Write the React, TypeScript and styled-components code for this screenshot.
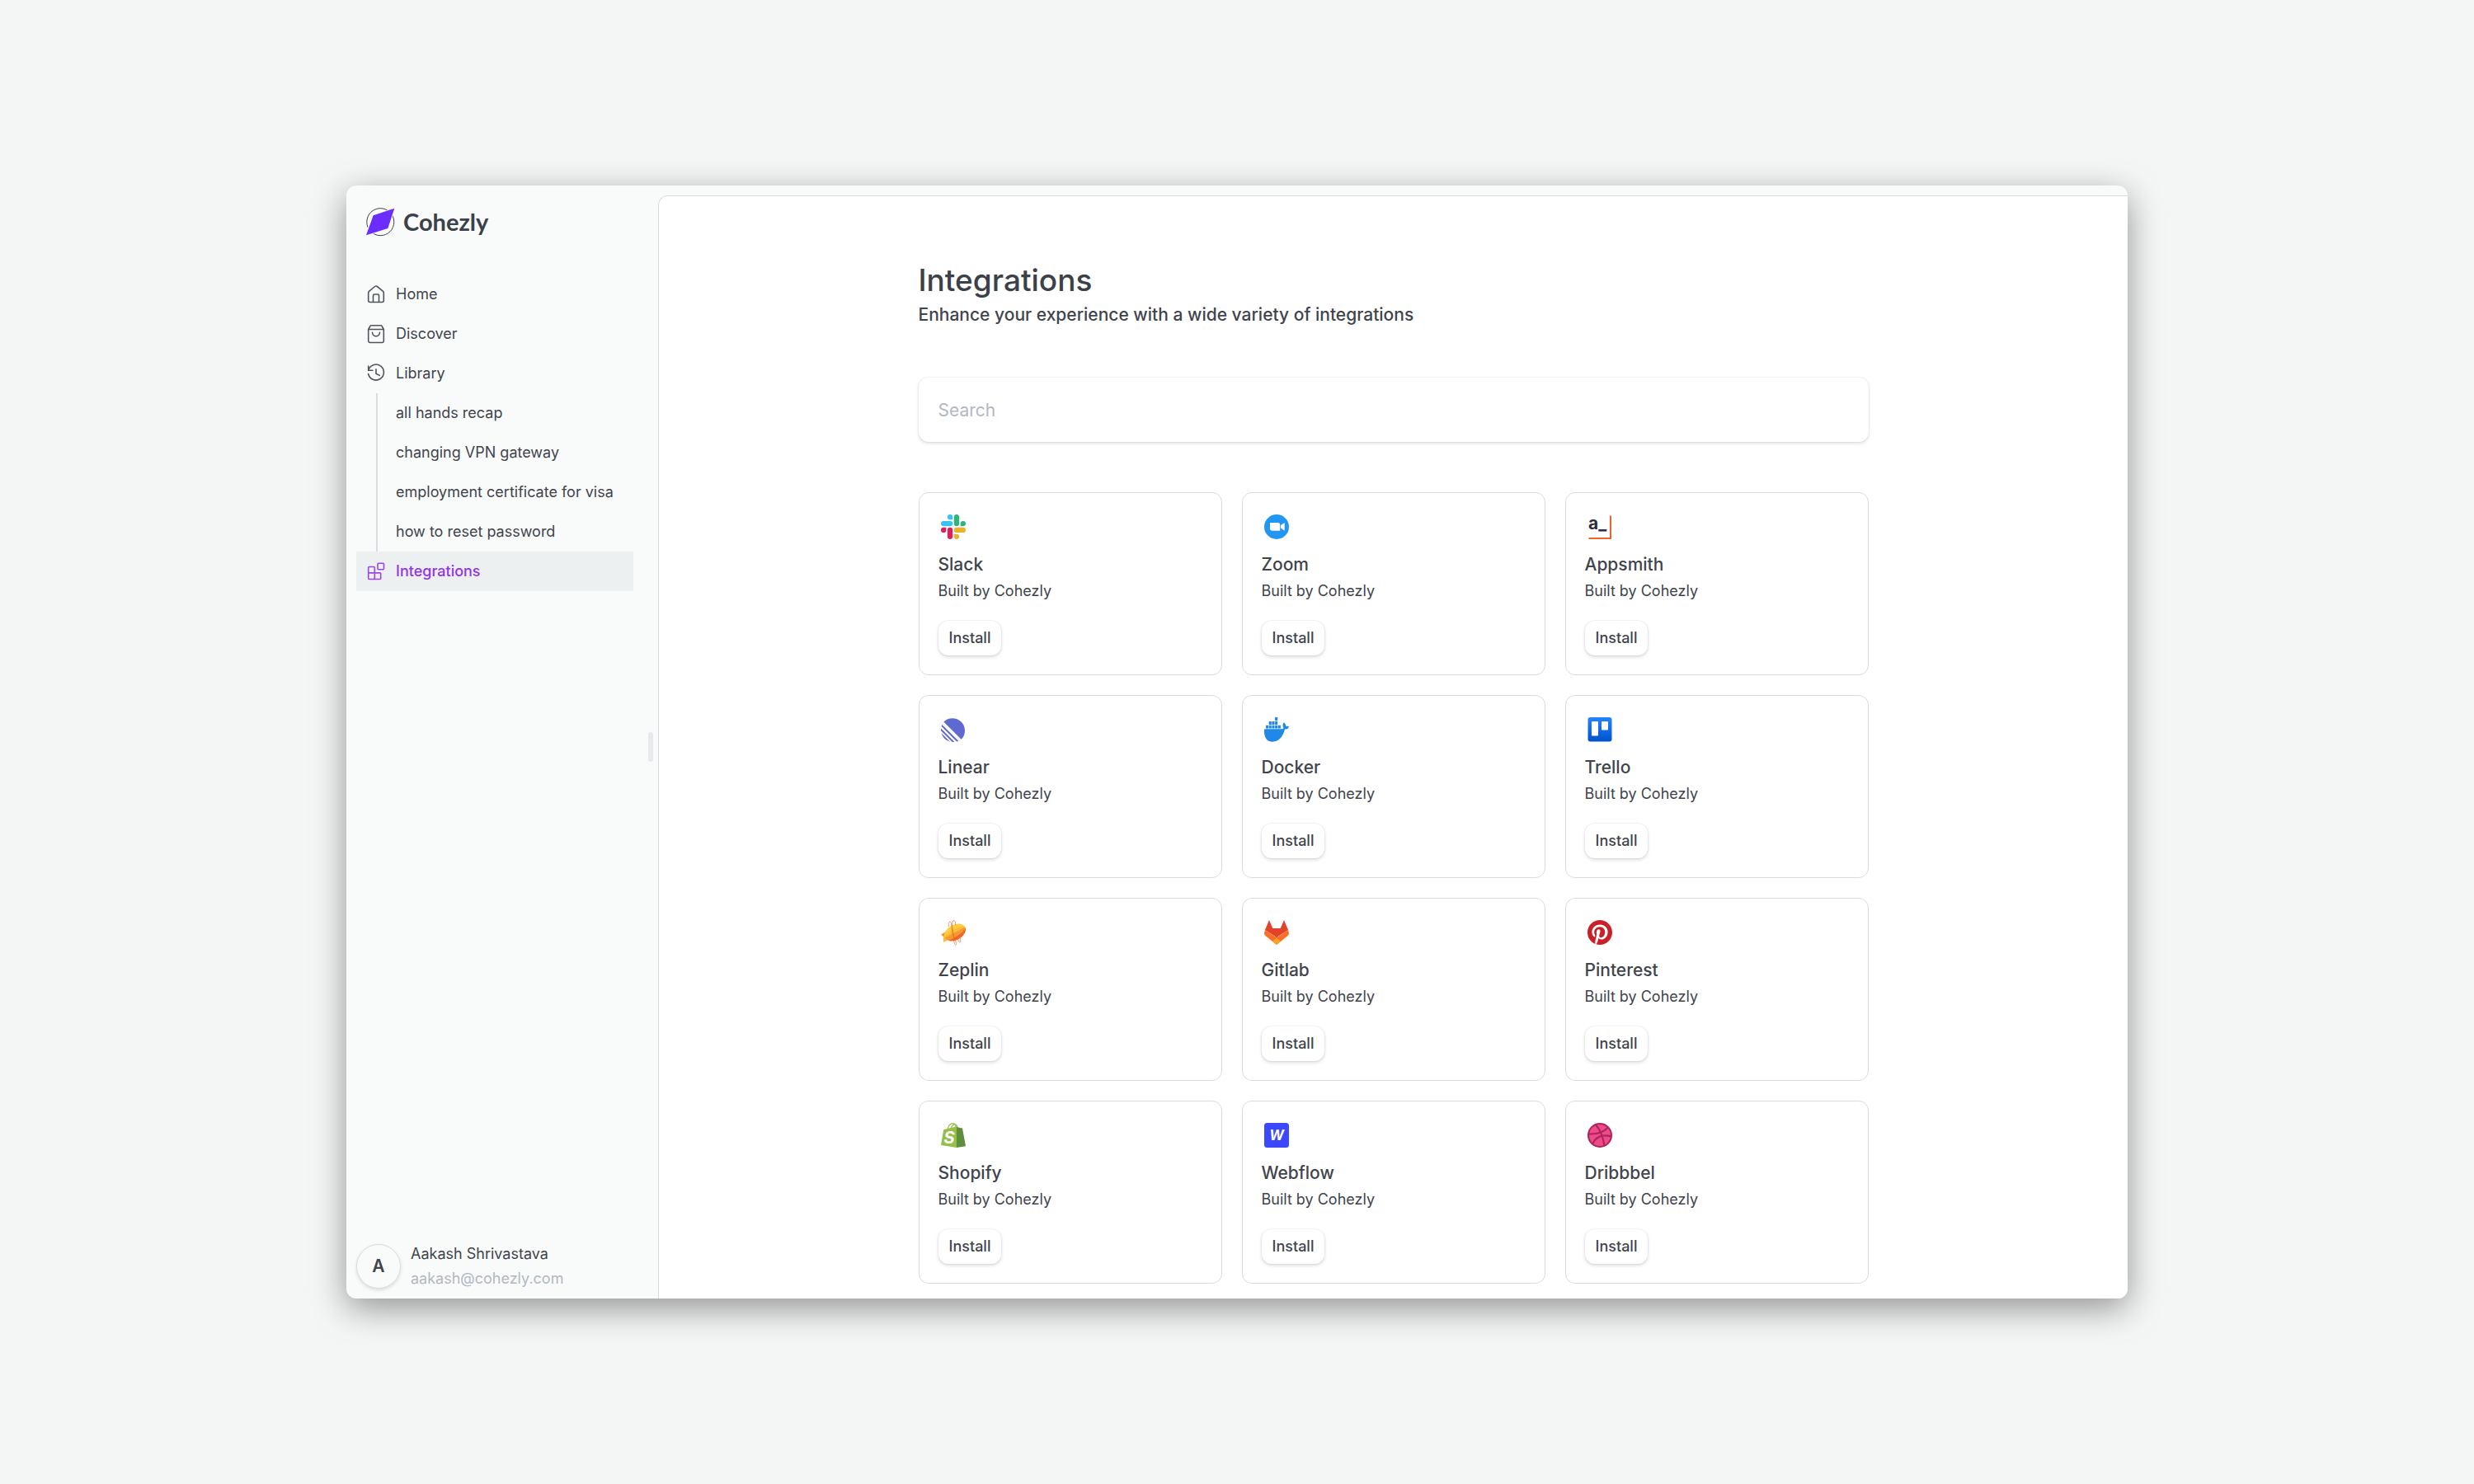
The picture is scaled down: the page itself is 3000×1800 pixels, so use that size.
import React from "react";
import styled, { createGlobalStyle, css } from "styled-components";

const color = {
  page: "#f4f6f5",
  shell: "#f9fbfa",
  surface: "#ffffff",
  active: "#edf0f1",
  line: "#d8dce1",
  handle: "#e7eaed",
  text: "#3f444d",
  heading: "#3b4149",
  muted: "#b1b8c4",
  accent: "#9333ea",
};

const GlobalStyle = createGlobalStyle`
  *, *::before, *::after { box-sizing: border-box; }
  body {
    margin: 0;
    background: ${color.page};
    color: ${color.text};
    font-family: Inter, "Liberation Sans", sans-serif;
    font-size: 18px;
    line-height: 24px;
  }
  h1, h2, p, ul { margin: 0; padding: 0; }
  ul { list-style: none; }
  button, input { font: inherit; color: inherit; }
`;

const Page = styled.div`
  min-height: 100vh;
  display: flex;
  align-items: center;
  justify-content: center;
`;

const Window = styled.div`
  display: flex;
  width: 72%;
  height: 75vh;
  padding-top: 12px;
  overflow: hidden;
  border-radius: 12px;
  background: ${color.shell};
  box-shadow: 0 12px 42px rgba(0, 0, 0, 0.4);
`;

const Sidebar = styled.aside`
  display: flex;
  flex-direction: column;
  flex: none;
  width: 360px;
  padding: 12px;
`;

const Brand = styled.a`
  display: flex;
  align-items: center;
  gap: 10px;
  height: 40px;
  margin-bottom: 44px;
  padding-left: 12px;
  color: ${color.heading};
  font: 700 29px/36px Lato, sans-serif;
  text-decoration: none;
`;

const rowStyle = css`
  display: flex;
  align-items: center;
  height: 48px;
  text-decoration: none;
  white-space: nowrap;
`;

const NavLink = styled.a<{ $active?: boolean }>`
  ${rowStyle}
  gap: 12px;
  padding: 0 12px;
  color: ${(p) => (p.$active ? color.accent : color.text)};
  background: ${(p) => (p.$active ? color.active : "transparent")};
  font-weight: ${(p) => (p.$active ? 500 : 400)};
`;

const SubList = styled.ul`
  margin-left: 24px;
  border-left: 2px solid ${color.line};
`;

const SubLink = styled.a`
  ${rowStyle}
  padding-left: 22px;
  color: ${color.text};
`;

const NavIcon = styled.svg`
  width: 24px;
  height: 24px;
  fill: none;
  stroke: currentColor;
  stroke-width: 1.6;
  stroke-linecap: round;
  stroke-linejoin: round;
  opacity: 0.9;
`;

const Account = styled.div`
  display: flex;
  align-items: center;
  gap: 12px;
  margin-top: auto;
`;

const Avatar = styled.div`
  display: grid;
  place-items: center;
  width: 54px;
  height: 54px;
  border: 1px solid ${color.line};
  border-radius: 50%;
  background: ${color.shell};
  box-shadow: 0 2px 4px rgba(0, 0, 0, 0.12);
  font-size: 21px;
  font-weight: 600;
`;

const AccountText = styled.div`
  display: flex;
  flex-direction: column;
  gap: 6px;
`;

const Email = styled.span`
  color: ${color.muted};
`;

const Resizer = styled.div`
  display: flex;
  align-items: center;
  justify-content: center;
  flex: none;
  width: 18px;
  cursor: col-resize;

  &::after {
    content: "";
    width: 6px;
    height: 36px;
    border-radius: 3px;
    background: ${color.handle};
  }
`;

const Main = styled.main`
  flex: 1;
  min-width: 0;
  padding: 80px 24px 0;
  overflow: hidden;
  border-top: 1px solid ${color.line};
  border-left: 1px solid ${color.line};
  border-top-left-radius: 12px;
  background: ${color.surface};
`;

const Content = styled.div`
  max-width: 1152px;
  margin: 0 auto;
`;

const Title = styled.h1`
  color: ${color.heading};
  font-size: 37px;
  font-weight: 500;
  line-height: 44px;
`;

const Lead = styled.p`
  margin-top: 6px;
  font-size: 21px;
  font-weight: 500;
  line-height: 28px;
`;

const Search = styled.input`
  display: block;
  width: 100%;
  height: 78px;
  margin: 62px 0 61px;
  padding: 0 24px;
  border: 0;
  border-radius: 12px;
  background: ${color.surface};
  box-shadow: 0 0 2px rgba(0, 0, 0, 0.12), 0 2px 4px rgba(0, 0, 0, 0.12);
  font-size: 21px;

  &::placeholder {
    color: ${color.muted};
    opacity: 1;
  }
`;

const Grid = styled.div`
  display: grid;
  grid-template-columns: repeat(3, 1fr);
  gap: 24px;
`;

const Card = styled.article`
  padding: 23px;
  border: 1px solid ${color.line};
  border-radius: 12px;
`;

const Logo = styled.svg`
  display: block;
  width: 36px;
  height: 36px;
  padding: 3px;
  margin-bottom: 14px;
  overflow: visible;
`;

const Name = styled.h2`
  font-size: 21px;
  font-weight: 500;
  line-height: 28px;
`;

const Author = styled.p`
  margin: 6px 0 24px;
`;

const Install = styled.button`
  height: 42px;
  padding: 0 13px;
  border: 0;
  border-radius: 12px;
  background: ${color.surface};
  box-shadow: 0 0 2px rgba(0, 0, 0, 0.12), 0 2px 4px rgba(0, 0, 0, 0.14);
  font-weight: 500;
  cursor: pointer;
`;

const LogoText = styled.text`
  font-family: Inter, sans-serif;
  font-weight: 700;
`;

const logos: Record<string, React.ReactNode> = {
  Slack: (
    <g transform="scale(1.25)">
      <path fill="#E01E5A" d="M5.042 15.165a2.528 2.528 0 0 1-2.52 2.523A2.528 2.528 0 0 1 0 15.165a2.527 2.527 0 0 1 2.522-2.52h2.52v2.52zM6.313 15.165a2.527 2.527 0 0 1 2.521-2.52 2.527 2.527 0 0 1 2.521 2.52v6.313A2.528 2.528 0 0 1 8.834 24a2.528 2.528 0 0 1-2.521-2.522v-6.313z" />
      <path fill="#36C5F0" d="M8.834 5.042a2.528 2.528 0 0 1-2.521-2.52A2.528 2.528 0 0 1 8.834 0a2.528 2.528 0 0 1 2.521 2.522v2.52H8.834zM8.834 6.313a2.528 2.528 0 0 1 2.521 2.521 2.528 2.528 0 0 1-2.521 2.521H2.522A2.528 2.528 0 0 1 0 8.834a2.528 2.528 0 0 1 2.522-2.521h6.312z" />
      <path fill="#2EB67D" d="M18.956 8.834a2.528 2.528 0 0 1 2.522-2.521A2.528 2.528 0 0 1 24 8.834a2.528 2.528 0 0 1-2.522 2.521h-2.522V8.834zM17.688 8.834a2.528 2.528 0 0 1-2.523 2.521 2.527 2.527 0 0 1-2.52-2.521V2.522A2.527 2.527 0 0 1 15.165 0a2.528 2.528 0 0 1 2.523 2.522v6.312z" />
      <path fill="#ECB22E" d="M15.165 18.956a2.528 2.528 0 0 1 2.523 2.522A2.528 2.528 0 0 1 15.165 24a2.527 2.527 0 0 1-2.52-2.522v-2.522h2.52zM15.165 17.688a2.527 2.527 0 0 1-2.52-2.523 2.526 2.526 0 0 1 2.52-2.52h6.313A2.527 2.527 0 0 1 24 15.165a2.528 2.528 0 0 1-2.522 2.523h-6.313z" />
    </g>
  ),
  Zoom: (
    <>
      <circle cx="15" cy="15" r="15" fill="#2196f3" />
      <path fill="#fff" d="M7 10h9.500a2.700 2.700 0 0 1 2.700 2.700v7H9.700A2.700 2.700 0 0 1 7 17zM20 13.300l4.700-3.300v9.700L20 16.500z" />
    </>
  ),
  Appsmith: (
    <>
      <LogoText x="1" y="18" fontSize="21" fill="#2b2f3e">a_</LogoText>
      <path fill="none" stroke="#f2602c" strokeWidth="2" d="M1.500 29H28V1.500" />
    </>
  ),
  Linear: (
    <g fill="#5e6ad2">
      <path d="M3.300 5.600A15 15 0 1 1 24.600 26.800z" />
      <path d="M1.400 8.900 21.300 28.700 19.100 29.500 0.600 11z M0.100 13.600 16.500 29.950 13.700 29.950 0 16.300z M0.500 19.300 10.800 29.500C5.700 28 2 24.300 0.500 19.300z" />
    </g>
  ),
  Docker: (
    <g fill="#2089e8">
      <path d="M13.100 0h3.100v4h-3.100zM5.700 5h3.100v3.900H5.700zM9.400 5h3.100v3.900H9.400zM13.100 5h3.100v3.900h-3.100zM2 9.700h3.100v3.700H2zM5.700 9.700h3.100v3.700H5.700zM9.400 9.700h3.100v3.700H9.400zM13.100 9.700h3.100v3.700h-3.100zM16.800 9.700h3.100v3.700h-3.100z" />
      <path d="M.5 14.300H20.500C22 14.300 23.200 13.800 23.600 13.300 22 11 22.200 8.200 23.700 6.300 25.400 7.500 26.200 9 26.300 10.800 27.500 10.500 28.900 10.700 30 11.400 29.200 13.600 27.300 14.700 25 14.600 22.500 24.500 17 29.700 10 29.700 3 29.700-.6 24 .1 15z" />
    </g>
  ),
  Trello: (
    <>
      <defs>
        <linearGradient id="trello" x1="0" y1="0" x2="0" y2="1">
          <stop offset="0" stopColor="#2684ff" />
          <stop offset="1" stopColor="#0052cc" />
        </linearGradient>
      </defs>
      <rect x=".5" width="29" height="29.500" rx="3" fill="url(#trello)" />
      <rect x="5" y="5" width="8" height="17.500" rx="1" fill="#fff" />
      <rect x="17" y="5" width="8" height="10.500" rx="1" fill="#fff" />
    </>
  ),
  Zeplin: (
    <>
      <path fill="#f69833" d="M0 17.500 6 14 8 20 4 21z" />
      <path fill="#fdbd39" d="M3 20 9 19 7 25 3 27z" />
      <g transform="rotate(-28 17 15)">
        <ellipse cx="17" cy="15" rx="13.800" ry="9" fill="#fdbd39" />
        <path fill="#ffd23d" d="M3.200 15a13.800 9 0 0 1 27.600 0C27 9.800 10 9.800 3.200 15z" opacity=".8" />
        <path fill="#f69833" d="M3.200 15a13.800 9 0 0 0 27.600 0z" />
        <path fill="#ee6723" d="M5.500 20.200C12.500 21 25.500 20 30.500 16.600 28.500 21.500 23 24 17 24 12 24 8 22.500 5.500 20.200z" />
      </g>
      <path fill="none" stroke="#ee6723" strokeWidth=".7" d="M9.500 8C8 1 12 1 12.500 4L16 20C17 25 20 30 18 30 16 30 16 26 15.500 24M15.500 22C12 12 13 0 16 .5 18 1 17.500 5 17.500 6M23.500 22C24.500 28 22.500 29 20.500 23" />
    </>
  ),
  Gitlab: (
    <>
      <path fill="#e24329" d="M6 0 10.300 10H19.700L24 0 29 12 15 21 1 12z" />
      <path fill="#fc6d26" d="M1 12 0 16C0 17 .3 18 1.500 19L15 30 28.500 19C29.700 18 30 17 30 16L29 12 15 21.500z" />
      <path fill="#e24329" d="M6.500 10h17L15 21.800z" />
      <path fill="#fca326" d="M15 21.500 20 25.800 15 30 10 25.800z" />
    </>
  ),
  Pinterest: (
    <>
      <circle cx="15" cy="15" r="15" fill="#fff" />
      <path fill="#cb1f27" transform="scale(1.25)" d="M12 0C5.373 0 0 5.372 0 12c0 5.084 3.163 9.426 7.627 11.174-.105-.949-.2-2.405.042-3.441.218-.937 1.407-5.965 1.407-5.965s-.359-.719-.359-1.782c0-1.668.967-2.914 2.171-2.914 1.023 0 1.518.769 1.518 1.690 0 1.029-.655 2.568-.994 3.995-.283 1.194.599 2.169 1.777 2.169 2.133 0 3.772-2.249 3.772-5.495 0-2.873-2.064-4.882-5.012-4.882-3.414 0-5.418 2.561-5.418 5.207 0 1.031.397 2.138.893 2.738a.360.360 0 0 1 .083.345l-.333 1.360c-.053.220-.174.267-.402.161-1.499-.698-2.436-2.889-2.436-4.649 0-3.785 2.750-7.262 7.929-7.262 4.163 0 7.398 2.967 7.398 6.931 0 4.136-2.607 7.464-6.227 7.464-1.216 0-2.359-.631-2.750-1.378l-.748 2.853c-.271 1.043-1.002 2.350-1.492 3.146 1.124.347 2.317.535 3.554.535 6.627 0 12-5.373 12-12 0-6.628-5.373-12-12-12z" />
    </>
  ),
  Shopify: (
    <>
      <path fill="#95bf46" d="M3.200 8.300 19 4.200V30L0 27z" />
      <path fill="#5e8e3e" d="M19 4.200 21 5.500 26 6.500 30 28.200 19 30z" />
      <path fill="none" stroke="#95bf46" strokeWidth="1.300" d="M8 8C9 3 12 .7 14.500 .7 17.500 .7 18.500 3.500 18.500 6.500M12 7C13 3 15 1.800 17 1.600 18.500 2 19.500 3 20 5" />
      <LogoText x="3.500" y="24.500" fontSize="20" fontStyle="italic" fill="#fff">S</LogoText>
    </>
  ),
  Webflow: (
    <>
      <rect width="30" height="30" rx="3.500" fill="#3b48ff" />
      <LogoText x="15" y="20.500" fontSize="17" fontStyle="italic" textAnchor="middle" fill="#fff">W</LogoText>
    </>
  ),
  Dribbbel: (
    <g fill="none" stroke="#b2215a" strokeWidth="2">
      <circle cx="15" cy="15" r="14" fill="#ea4c89" />
      <path d="M10 2C15 8 19 17 20.500 28M1.500 13.500C10 13.800 19 12 25 5.500M6 25.500C10 17 18 13.500 29 16.500" />
    </g>
  ),
};

const recent = [
  "all hands recap",
  "changing VPN gateway",
  "employment certificate for visa",
  "how to reset password",
];

export default function App() {
  return (
    <Page>
      <GlobalStyle />
      <Window>
        <Sidebar>
          <Brand href="#">
            <svg width="35" height="35" viewBox="0 0 35 35" aria-hidden="true">
              <circle cx="17.300" cy="17.200" r="16.500" fill="none" stroke="#3b4149" />
              <path d="M34.300 .7 8.700 9.300 0 33.300 26.300 25z" fill="#6a2cff" stroke={color.shell} strokeWidth="2" paintOrder="stroke" />
            </svg>
            Cohezly
          </Brand>
          <nav>
            <ul>
              <li>
                <NavLink href="#home">
                  <NavIcon viewBox="0 0 24 24">
                    <path d="M2.700 10.200c0-.9.300-1.500 1-2.100L10.600 2.500c.9-.7 1.900-.7 2.800 0l6.900 5.600c.7.600 1 1.200 1 2.100V19.500a2 2 0 0 1-2 2H4.700a2 2 0 0 1-2-2zM8.500 21.500V13.500a1.500 1.500 0 0 1 1.500-1.500h4a1.500 1.500 0 0 1 1.500 1.500v8" />
                  </NavIcon>
                  Home
                </NavLink>
              </li>
              <li>
                <NavLink href="#discover">
                  <NavIcon viewBox="0 0 24 24">
                    <path d="M2.700 6.500v14a2 2 0 0 0 2 2h14.600a2 2 0 0 0 2-2v-14L19 2.300a1.500 1.500 0 0 0-1.200-.6H6.200A1.500 1.500 0 0 0 5 2.300zM2.700 6.500h18.600M16.500 10.200a4.500 4.500 0 0 1-9 0" />
                  </NavIcon>
                  Discover
                </NavLink>
              </li>
              <li>
                <NavLink href="#library">
                  <NavIcon viewBox="0 0 24 24">
                    <path d="M2.700 3v5.200h5.200M2.700 8.200A9.500 9.500 0 1 1 2.600 12.500M12 6.800v5.400l4.300 2.200" />
                  </NavIcon>
                  Library
                </NavLink>
                <SubList>
                  {recent.map((label) => (
                    <li key={label}>
                      <SubLink href="#library">{label}</SubLink>
                    </li>
                  ))}
                </SubList>
              </li>
              <li>
                <NavLink href="#integrations" $active aria-current="page">
                  <NavIcon viewBox="0 0 24 24">
                    <rect x="14" y="2.300" width="7.500" height="7.500" rx="1" />
                    <path d="M10.300 21.500V7.500a1 1 0 0 0-1-1H3.700a1 1 0 0 0-1 1v13a1 1 0 0 0 1 1h13a1 1 0 0 0 1-1v-5.600a1 1 0 0 0-1-1H2.700" />
                  </NavIcon>
                  Integrations
                </NavLink>
              </li>
            </ul>
          </nav>
          <Account>
            <Avatar>A</Avatar>
            <AccountText>
              <span>Aakash Shrivastava</span>
              <Email>aakash@cohezly.com</Email>
            </AccountText>
          </Account>
        </Sidebar>
        <Resizer />
        <Main>
          <Content>
            <Title>Integrations</Title>
            <Lead>Enhance your experience with a wide variety of integrations</Lead>
            <Search type="search" placeholder="Search" aria-label="Search integrations" />
            <Grid>
              {Object.entries(logos).map(([name, drawing]) => (
                <Card key={name}>
                  <Logo viewBox="0 0 30 30" aria-hidden="true">{drawing}</Logo>
                  <Name>{name}</Name>
                  <Author>Built by Cohezly</Author>
                  <Install type="button">Install</Install>
                </Card>
              ))}
            </Grid>
          </Content>
        </Main>
      </Window>
    </Page>
  );
}
